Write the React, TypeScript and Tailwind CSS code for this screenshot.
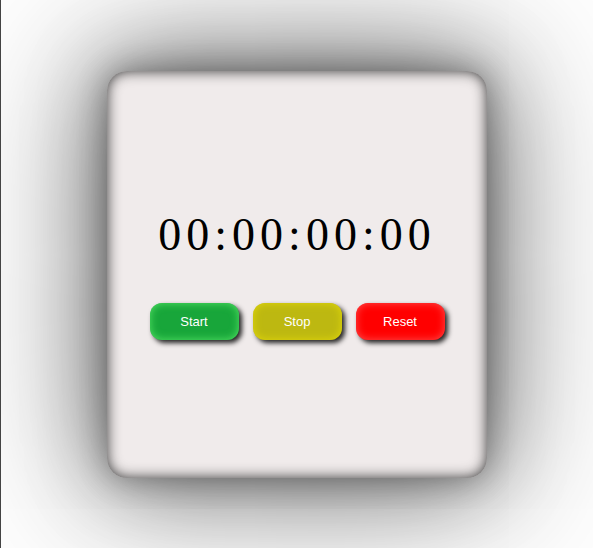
import React from "react";

export default function App() {
  return (
    <div className="w-[593px] h-[548px] bg-white border-l border-[#444] flex items-center justify-center overflow-hidden">
      <div className="w-[380px] h-[407px] rounded-[20px] bg-[#f0ebeb] shadow-[0_0_30px_rgba(0,0,0,0.3),0_0_80px_rgba(0,0,0,0.4),0_0_150px_15px_rgba(0,0,0,0.45),inset_0_0_14px_#333] flex flex-col items-center justify-center gap-[45px] pt-[4px]">
        <div
          className="text-[46px] leading-none tracking-[5px] text-black"
          style={{ fontFamily: '"Liberation Serif", "Times New Roman", serif' }}
        >
          00:00:00:00
        </div>
        <div
          className="flex gap-[14px] text-[13px] text-white"
          style={{ fontFamily: '"Liberation Sans", Arial, sans-serif' }}
        >
          <button className="w-[89px] h-[37px] rounded-[12px] bg-[#18a63a] shadow-[3px_3px_5px_rgba(0,0,0,0.85),inset_0_0_8px_#55e566]">
            Start
          </button>
          <button className="w-[89px] h-[37px] rounded-[12px] bg-[#bdb811] shadow-[3px_3px_5px_rgba(0,0,0,0.85),inset_0_0_8px_#e2d80a]">
            Stop
          </button>
          <button className="w-[89px] h-[37px] rounded-[12px] bg-[#ff0000] shadow-[3px_3px_5px_rgba(0,0,0,0.85),inset_0_0_8px_#ff5050]">
            Reset
          </button>
        </div>
      </div>
    </div>
  );
}
